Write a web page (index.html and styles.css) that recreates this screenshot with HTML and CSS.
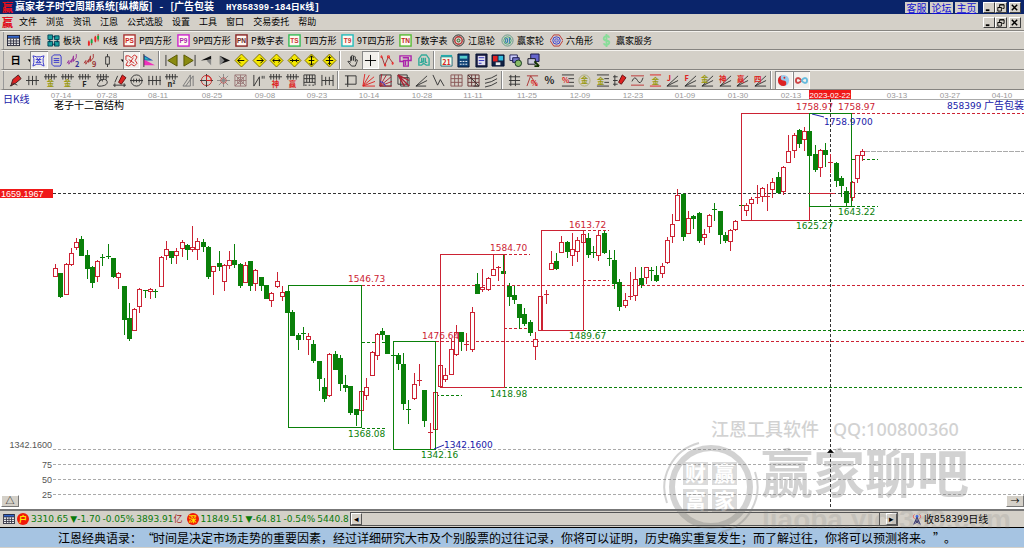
FILE: index.html
```html
<!DOCTYPE html>
<html lang="zh-CN">
<head>
<meta charset="utf-8">
<title>赢家老子时空周期系统</title>
<link rel="stylesheet" href="styles.css">
</head>
<body>
<header class="title-bar">
  <span class="brand">赢</span>
  <h1 class="title"><span>赢家老子时空周期系统[纵横版]</span><span>-</span><span>[广告包装</span><span class="title-code">HY858399-184日K线]</span></h1>
  <nav class="title-links"><a href="#service">客服</a><a href="#forum">论坛</a><a href="#home">主页</a></nav>
  <div class="window-buttons">
    <button class="win" aria-label="最小化"><svg viewBox="0 0 10 10"><path d="M2 8h4" stroke="#000" stroke-width="2"/></svg></button>
    <button class="win" aria-label="还原"><svg viewBox="0 0 10 10"><path d="M4 5V2h5v4H7M2 5h4v4H2zM4 2h5M2 5h4" fill="none" stroke="#000"/></svg></button>
    <button class="win win-close" aria-label="关闭"><svg viewBox="0 0 10 10"><path d="M2 2l6 6M8 2L2 8" stroke="#000" stroke-width="1.6"/></svg></button>
  </div>
</header>
<div class="menu-bar">
  <span class="brand">赢</span>
  <nav class="menus">
    <button>文件</button><button>浏览</button><button>资讯</button><button>江恩</button><button>公式选股</button><button>设置</button><button>工具</button><button>窗口</button><button>交易委托</button><button>帮助</button>
  </nav>
  <div class="window-buttons">
    <button class="win" aria-label="最小化子窗口"><svg viewBox="0 0 10 10"><path d="M2 8h4" stroke="#000" stroke-width="2"/></svg></button>
    <button class="win" aria-label="还原子窗口"><svg viewBox="0 0 10 10"><path d="M4 5V2h5v4H7M2 5h4v4H2zM4 2h5M2 5h4" fill="none" stroke="#000"/></svg></button>
    <button class="win win-close" aria-label="关闭子窗口"><svg viewBox="0 0 10 10"><path d="M2 2l6 6M8 2L2 8" stroke="#000" stroke-width="1.6"/></svg></button>
  </div>
</div>
<div class="toolbar features" id="features"></div>
<div class="toolbar" id="view-tools"></div>
<div class="toolbar" id="draw-tools"></div>
<main class="workspace">
  <svg class="chart" id="chart" viewBox="0 90 1024 419" role="img" aria-label="广告包装日K线"></svg>
  <button class="corner corner-left" aria-label="展开">△</button>
  <button class="corner corner-right" aria-label="向右">→</button>
  <svg class="watermark" viewBox="660 410 364 124" aria-hidden="true">
    <g fill="none" stroke="#777">
      <circle cx="711" cy="487" r="39" stroke-width="6"/>
      <path d="M667 503a46 46 0 0 1 32-60M755 472a46 46 0 0 1-34 60" stroke-width="2"/>
    </g>
    <g fill="#777">
      <path d="M683 462h25v23h-25zM712 462h25v23h-25zM683 489h25v23h-25zM712 489h25v23h-25z" opacity=".8"/>
      <text class="wm-name" x="761" y="493">赢家聊吧</text>
      <text class="wm-contact" x="711" y="436">江恩工具软件</text>
      <text class="wm-contact wm-latin" x="833" y="436">QQ:100800360</text>
      <text class="wm-site" x="762" y="529">liaoba.yicf369.com</text>
    </g>
    <g class="wm-seal" fill="#fff"><text x="685" y="481">财</text><text x="714" y="481">赢</text><text x="685" y="508">富</text><text x="714" y="508">家</text></g>
  </svg>
</main>
<footer class="status">
  <div class="indices">
    <svg class="cal" viewBox="0 0 14 12"><path d="M0 0h14v12H0z" fill="#223"/><path d="M1 1h12v2H1z" fill="#36c"/><path d="M1 4h12v7H1z" fill="#eee"/><path d="M1 6.5h12M1 9h12M4 4v7M7 4v7M10 4v7" stroke="#334"/></svg>
    <span class="badge">户</span>
    <span class="quote"><span>3310.65</span><span><i>▼</i>-1.70</span><span>-0.05%</span><span>3893.91<b>亿</b></span></span>
    <span class="badge">深</span>
    <span class="quote"><span>11849.51</span><span><i>▼</i>-64.81</span><span>-0.54%</span><span>5440.8</span></span>
  </div>
  <div class="scroller"><button aria-label="向左滚动">◂</button><div class="track"></div><button aria-label="向右滚动">▸</button></div>
  <div class="feed"><svg viewBox="0 0 12 14"><path d="M6 4L2 13M6 4l4 9M4 9h4M3 12l5-3M9 12L4 9M6 3v6" stroke="#226" fill="none"/><path d="M3 1a3 3 0 0 0 0 5M9 1a3 3 0 0 1 0 5" stroke="#e44" fill="none"/><circle cx="6" cy="3" r="1.5" fill="#36f"/></svg>收<span>858399</span>日线</div>
</footer>
<p class="motto">江恩经典语录：<span>“</span>时间是决定市场走势的重要因素，经过详细研究大市及个别股票的过往记录，你将可以证明，历史确实重复发生；而了解过往，你将可以预测将来。<span>”</span>。</p>
<script src="app.js"></script>
</body>
</html>
```
FILE: styles.css
```css
* { box-sizing: border-box; }
body {
  margin: 0;
  background: #a6c4e2;
  color: #000;
  font: 9px/12px "Noto Sans CJK SC", sans-serif;
  overflow-x: hidden;
}
button { font: inherit; color: inherit; border: 0; padding: 0; margin: 0; background: none; }
svg { display: block; }

.title-bar, .menu-bar { display: flex; align-items: center; padding: 0 3px 0 2px; }
.title-bar { height: 14px; background: #0a246a; color: #fff; }
.menu-bar { height: 17px; background: #d4d0c8; border-bottom: 1px solid #868480; }
.brand { width: 13px; color: #e01020; font-size: 11px; font-weight: 900; }
.title { display: flex; align-items: baseline; flex: 1; gap: 7px; margin: 0; font-size: 10px; font-weight: 700; white-space: nowrap; }
.title-code { margin-left: 5px; font-family: "Liberation Mono", "Noto Sans CJK SC", monospace; font-size: 9px; }
.title-links { display: flex; gap: 2px; margin-right: 5px; }
.title-links a { width: 23px; height: 11px; line-height: 11px; font-size: 10px; text-align: center; color: #1010d0; background: #d4d0c8; text-decoration: underline; }
.window-buttons { display: flex; }
.win { width: 12px; height: 11px; background: #d4d0c8; border: 1px solid; border-color: #fff #404040 #404040 #fff; }
.win svg { width: 9px; height: 9px; }
.win-close { margin-left: 2px; }
.menus { display: flex; flex: 1; gap: 9px; margin-left: 4px; }

.toolbar { display: flex; align-items: center; height: 20px; padding-left: 4px; background: #d4d0c8; border-top: 1px solid #f4f2ee; border-bottom: 1px solid #868480; border-left: 3px solid #d4d0c8; box-shadow: inset 1px 0 #999; }
.features { display: grid; grid-template-columns: 40px 40px 36px 54px 58px 53px 53px 58px 53px 49px 49px 50px 60px; height: 19px; }
.feature { display: flex; align-items: center; gap: 3px; white-space: nowrap; }
.feature svg { width: 13px; height: 13px; flex: none; }
.feature text { font: 700 7px "Liberation Sans", sans-serif; text-anchor: middle; }
.group { display: flex; justify-content: space-between; }
.group + .group { margin-left: 3px; padding-left: 3px; box-shadow: -1px 0 #fff, -2px 0 #888; }
.tool { display: grid; place-items: center; flex: 1; height: 18px; }
.tool svg { width: 13px; height: 13px; fill: none; stroke: #333; overflow: visible; }
.tool text { font: 700 8px "Noto Sans CJK SC", sans-serif; stroke: none; text-anchor: middle; }
.tool text.big { font-size: 11px; }
.tool.narrow { flex: none; width: 6px; }
.tool.pressed { background: #f2f0ec; box-shadow: inset 1px 1px #888, inset -1px -1px #fff; }

.workspace { position: relative; background: #fff; }
.chart { width: 100%; height: auto; }
.chart text { font: 9px "DejaVu Sans", "Noto Sans CJK SC", sans-serif; }
.chart .date { font: 8px "Liberation Sans", sans-serif; fill: #999; text-anchor: middle; }
.chart .date-current { fill: #fff; }
.chart .axis { font: 9px "Liberation Sans", sans-serif; fill: #555; text-anchor: end; }
.chart .price { font: 9px "Liberation Sans", sans-serif; }
.chart .name { font: 10px "Noto Sans CJK SC", sans-serif; }
.corner { position: absolute; bottom: 2px; width: 18px; height: 12px; line-height: 10px; background: #d4d0c8; border: 1px solid; border-color: #fff #777 #777 #fff; }
.corner-left { left: 1px; }
.corner-right { right: 0; }
.watermark { position: absolute; z-index: 1; right: 0; bottom: -25px; width: 364px; opacity: .32; pointer-events: none; }
.wm-name { font: 700 52px "Noto Sans CJK SC", sans-serif; }
.wm-contact { font: 500 18px "Noto Sans CJK SC", sans-serif; }
.wm-latin { font-family: "Noto Sans", sans-serif; }
.wm-site { font: 700 28px "Liberation Sans", sans-serif; opacity: .5; }
.wm-seal { font: 700 21px "Noto Sans CJK SC", sans-serif; }

.status { display: flex; align-items: center; height: 19px; background: #d4d0c8; border-top: 2px solid #777; border-bottom: 1px solid #000; }
.indices { display: flex; align-items: center; flex: none; padding-left: 3px; white-space: nowrap; }
.cal { flex: none; width: 12px; height: 10px; margin-right: 2px; }
.badge { flex: none; width: 12px; height: 12px; border-radius: 6px; background: #f01808; color: #ffe800; font-size: 8px; line-height: 12px; text-align: center; font-weight: 700; }
.quote { display: flex; flex: none; gap: 2px; margin: 0 4px 0 2px; color: #0a7a0a; font-family: "DejaVu Sans", "Noto Sans CJK SC", sans-serif; }
.quote:last-child { margin-right: 1px; }
.quote i { font-style: normal; }
.quote b { font-weight: 400; color: #a02020; }
.scroller { display: flex; flex: 1; height: 14px; border: 1px solid #555; }
.scroller button { width: 11px; border: 1px solid; border-color: #fff #555 #555 #fff; line-height: 10px; }
.track { flex: 1; border-right: 1px solid #555; margin-right: 6px; }
.feed { display: flex; align-items: center; width: 126px; padding-left: 14px; font-size: 10px; }
.feed span { font: 9px "DejaVu Sans", sans-serif; }
.feed svg { width: 10px; height: 13px; margin-right: 2px; }
.motto { margin: 0; padding: 0 0 0 58px; height: 20px; font-size: 12px; line-height: 20px; white-space: nowrap; overflow: hidden; border-bottom: 1px solid #d4d0c8; }
.motto span { display: inline-block; width: 11px; text-align: center; }
```
FILE: app.js
```js
const byId = (id) => document.getElementById(id);

/* ---- feature toolbar ---- */
const boxed = (t, c, tc) => `<rect x="1" y="1" width="12" height="12" fill="#fff8f0" stroke="${c}" stroke-width="1.5"/><text x="7" y="10" fill="${tc}">${t}</text>`;
const features = [
  ['行情', '<path d="M0 1h14v12H0z" fill="#223"/><path d="M1 2h12v2H1z" fill="#36c"/><path d="M1 5h12v7H1z" fill="#eee"/><path d="M1 7.500h12M1 10h12M4 5v7M7 5v7M10 5v7" stroke="#334"/>'],
  ['板块', '<path d="M1 1h5v5H1zM8 2h5v4H8zM1 8h5v5H1zM8 8h5v5H8z" fill="#18a0a0" stroke="#045" /><path d="M6 3h3M6 11h3M3 6v3M11 6v3" stroke="#024"/>'],
  ['K线', '<path d="M2 7v6M5 5v7M9 2v7M12 0v8" stroke="#c22"/><path d="M1 8h2v4H1zM8 3h2v5H8z" fill="#e22"/><path d="M4 6h2v4H4zM11 2h2v4h-2z" fill="#1a4"/>'],
  ['P四方形', boxed('PS', '#a33', '#c22')],
  ['9P四方形', boxed('P9', '#c2c', '#a2a')],
  ['P数字表', boxed('PN', '#822', '#622')],
  ['T四方形', boxed('TS', '#3b5', '#c33')],
  ['9T四方形', boxed('T9', '#2bb', '#c33')],
  ['T数字表', boxed('TN', '#5b3', '#b22')],
  ['江恩轮', '<g fill="none"><circle cx="7" cy="7" r="6" stroke="#222"/><circle cx="7" cy="7" r="4" stroke="#b33" stroke-width="1.500"/><circle cx="7" cy="7" r="1.500" stroke="#262"/></g>'],
  ['赢家轮', '<g fill="none"><circle cx="7" cy="7" r="6" stroke="#698"/><circle cx="7" cy="7" r="4" stroke="#4a7"/><path d="M5 5v4h2V5H5M9 4v6M10 5l-1 2" stroke="#27a"/></g>'],
  ['六角形', '<g fill="none"><path d="M4 1h6l4 6-4 6H4L0 7z" stroke="#b33"/><circle cx="7" cy="7" r="4" stroke="#33c"/><circle cx="7" cy="7" r="2" fill="#aac" stroke="#55d"/></g>'],
  ['赢家服务', '<path d="M10 4C9 1 4 2 4 5s6 1 6 4-5 4-6 1M7 0v14" fill="none" stroke="#8d9" stroke-width="2"/>'],
];
byId('features').innerHTML = features.map(([label, art]) => `<button class="feature"><svg viewBox="0 0 14 14">${art}</svg>${label}</button>`).join('');

/* ---- icon toolbars ---- */
const P = (d, extra = '') => `<path d="${d}" ${extra}/>`;
const red = 'stroke="#d22"';
const T = (t, x, y, c, big) => `<text x="${x}" y="${y}" fill="${c}"${big ? ' class="big"' : ''}>${t}</text>`;
const diamond = (d) => P('M7 0l7 7-7 7-7-7z', 'fill="#f5e800" stroke="#776a00"') + P(d, 'stroke="#000"');
const fan = P('M1 13L13 2M1 13L13 7M1 13h12');
const comb = P('M0 3h14M2 0v6M5 0v6M8 0v6M11 0v6');
const grid = 'M1 1h12v12H1zM1 5h12M1 9h12M5 1v12M9 1v12';
const rays = 'M1 13L3 0M1 13L8 1M1 13L13 3M1 13L14 8M1 13h13';
const pencil = P('M6 9l4-8 4 3-5 7z', 'fill="#d22" stroke="#611"');

const viewTools = [
  [150, [
    ['周期', T('日', 7, 11, '#000', 1)], ['周期列表', P('M1 6h5L3.500 9z', 'fill="#000" stroke="none"'), 'narrow'],
    ['区间', P('M1 2l4 1h4l4-1-1 3v4l1 4-4-2H5l-4 2 1-4V5zM4 6h6M4 9h6M5 4l4 5M9 4L5 9', 'stroke="#33c"'), 'pressed'],
    ['资料', P('M4 1h7l1 2v8l-1 2H4l-2-2V3zM4 5h6M4 7h6M4 9h6', 'stroke="#33c"')],
    ['均线二', P('M0 10l2-3v4l3-5v3l2-7v6l3-4V0', 'stroke="#939"') + T('2', 11, 14, '#339')],
    ['均线九', P('M0 10l2-3v4l3-5v3l2-7v6l3-4V0', 'stroke="#a33"') + T('9', 11, 14, '#933')],
    ['K线样式', P('M7 0v3M7 11v3M5 3h4v8H5z')], ['样式列表', P('M1 6h5L3.500 9z', 'fill="#000" stroke="none"'), 'narrow'],
    ['宫位', P('M1 2h3l3 2 3-3 3 2-2 4 2 3-3 3-3-2-3 2-3-1 2-4-2-2zM4 6l6 4M9 4l-4 6', 'stroke="#c22"'), 'pressed'],
    ['旗帜', P('M2 1l10 6H2z', 'fill="#25a" stroke="none"') + P('M2 6l12 6H2z', 'fill="#e3b" stroke="none"') + P('M2 0v14') + P('M3 3l5 3H3z', 'fill="#2bb" stroke="none"')],
  ]],
  [178, [
    ['最前', P('M1 1v12') + P('M13 1v12L3 7z', 'fill="#8a8a10" stroke="#550"')],
    ['最后', P('M13 1v12') + P('M1 1v12l10-6z', 'fill="#8a8a10" stroke="#550"')],
    ['前移', P('M1 7l11-5v4z', 'fill="#111" stroke="none"') + P('M7 7l5-2v7z', 'fill="#888" stroke="none"')],
    ['后移', P('M2 2l11 5-11 4z', 'fill="#111" stroke="none"') + P('M2 2l5 5-5 5z', 'fill="#888" stroke="none"')],
    ['左移', diamond('M3 7h7M6 4L3 7l3 3')], ['右移', diamond('M4 7h7M8 4l3 3-3 3')],
    ['横向展开', diamond('M3 7h8M5 5L3 7l2 2M9 5l2 2-2 2')], ['横向收缩', diamond('M2 7h10M4 5l2 2-2 2M10 5L8 7l2 2')],
    ['纵向展开', diamond('M7 2v10M5 4l2-2 2 2M5 10l2 2 2-2M4 7h6')], ['纵向收缩', diamond('M7 2v10M5 3l2 2 2-2M5 11l2-2 2 2M3 7h8')],
  ]],
  [91, [
    ['手形', P('M5 8V3q1-1 1 0v4-5q1-1 2 0v5-4q1-1 2 0v5l1-2q2 0 1 2l-2 5H6L2 8q1-1 3 1')],
    ['十字光标', P('M7 1v12M1 7h12', 'stroke="#000"'), 'pressed'],
    ['折线', P('M1 3l3 9 4-9 5 7', 'stroke="#933"') + P('M0 2h1v2H0zM4 11h1v2H4zM7 2h2v2H7zM12 9h1v2h-1z', 'stroke="#e22"')],
    ['宝塔', P('M1 2h12v5h-3v6H5V8H1zM4 4h6v3H4M7 7v5', 'stroke="#a2a" stroke-width="1.500"')],
    ['脑图', P('M2 12V5l3-4h5l3 4v7h-3l-3-2-2 2zM5 4v4h2V4M9 4v5h2M3 9h3', 'stroke="#3a9" stroke-width="1.500"')],
  ]],
  [107, [
    ['日历', P('M1 3h12v10H1z', 'fill="#efe" stroke="#267"') + P('M1 2h12', 'stroke="#2aa" stroke-width="2"') + T('21', 7, 12, '#d22')],
    ['计算器', P('M1 0h12v14H1z', 'fill="#147" stroke="#013"') + P('M3 2h8v3H3z', 'fill="#5cc" stroke="none"') + P('M3 8h8M3 11h8', 'stroke="#fff" stroke-dasharray="2 1"')],
    ['报表', P('M1 0h12v14H1z', 'fill="#224" stroke="#013"') + P('M3 2h8v10H3z', 'fill="#dde" stroke="none"') + P('M4 4h6M4 7h6M4 10h3', 'stroke="#33b"')],
    ['保存', P('M0 1h13v12H0z', 'fill="#124" stroke="#013"') + P('M1 2h5v6H1z', 'fill="#d22" stroke="none"') + P('M7 2h5v5H7z', 'fill="#3bd" stroke="none"') + P('M4 9h5v3H4z', 'fill="#eee" stroke="none"')],
    ['联网', P('M1 1h8v6H1z', 'fill="#ccf" stroke="#225"') + P('M4 4h7v5H4z', 'fill="#77c" stroke="#114"') + '<circle cx="10" cy="10" r="3.500" fill="#8b6" stroke="#132"/>'],
    ['打印', P('M4 0h9v8H4z', 'fill="#66c" stroke="#114"') + P('M1 5h8v6H1z', 'fill="#ccd" stroke="#112"') + P('M8 8l5 5M8 13h5', 'stroke="#130" stroke-width="2"')],
  ]],
];
const drawTools = [
  [329, [
    ['画笔', P('M2 13l2-7 6-5 3 4-6 5z', 'fill="#d22" stroke="#422"') + P('M1 13l4-3 4 2')],
    ['水平线', P('M0 7h14M3 2v10M7 2v10M11 2v10')],
    ['黄金一', comb + T('金', 7, 13, '#991')], ['黄金二', comb + T('金', 7, 13, '#991')],
    ['斐波', comb + T('F', 7, 14, '#222')], ['螺旋', comb + P('M3 7q8-3 9 1t-6 5-3-4 4-1')],
    ['标尺', pencil + P('M0 12h14M2 10v4M12 10v4M5 2L2 9')],
    ['圆周', '<circle cx="7" cy="7" r="6"/>' + P('M0 7h14M4 5v4M7 5v4M10 5v4')],
    ['等距线', P('M0 7h14M1 2v10M5 2v10M9 2v10M13 2v10')], ['平方', comb + T('n²', 7, 14, '#222')],
    ['角度', P('M1 13L9 1v12zM4 13L12 2v11', 'stroke="#777"')],
    ['轮盘', '<circle cx="7" cy="7" r="5.500" stroke="#b33"/>' + P('M7 0v14M0 7h14') + P('M7 2a5 5 0 0 1 5 5H7z', red)],
    ['星形', P('M7 0v14M0 7h14M2 2l10 10M12 2L2 12', 'stroke="#888"') + '<circle cx="7" cy="7" r="3" stroke="#b55"/>'],
    ['方阵', P('M1 1h12v12H1zM1 1l12 12M13 1L1 13M7 1v12M1 7h12M4 4h6v6H4z', 'stroke="#977"')],
    ['波段', P('M2 1v12L8 3v10M11 2v3M13 2v3')],
    ['神线', comb + T('神', 7, 14, '#d22')], ['赢线', comb + T('赢', 7, 14, '#d22')],
    ['帘线', P('M1 1h12v11M1 1v12M1 5h12M1 9h12M4 1v8M7 1v8M10 1v8M2 12h2M6 12h2M10 12h2')], ['缺口', P('M1 1v12M13 1v12M5 3v9M9 3v9M1 7h4M9 7h4M5 7h4')],
  ]],
  [161, [
    ['框选', P('M4 2h9v9H4zM1 2h3v9H1M4 11v3')], ['扇形', P(rays, red)],
    ['扇形框', P('M1 1h12v12H1z') + P(rays, 'stroke="#a23"') + P('M1 8a7 7 0 0 1 6 5', 'stroke="#33c"')],
    ['反扇形', P('M1 1h10v10H1zM4 4h9v9H4z') + P('M1 1l12 12M1 1l7 12M1 1l12 6', 'stroke="#a23" stroke-width="1.500"')],
    ['射线', P('M1 13L13 2M1 13L13 7M1 13h11')], ['谷线', P('M1 1l5 11 3-6 4 7')],
    ['网格', P(grid, 'stroke="#855"')], ['密网', P(grid, 'stroke="#633"') + P('M1 1l12 12M13 13h-6')],
    ['平行线', P('M0 6q7-1 13-5M0 10q7-1 13-5M0 14q7-1 13-5')],
  ]],
  [266, [
    ['刻度', P('M3 1v12M1 3h12M1 7h12M1 11h12M8 1v12')], ['百分方', P('M1 2h12M1 13L5 2l7 11', 'stroke="#a33"') + T('%', 9, 13, '#d22')],
    ['百分比', T('%', 7, 11, '#222', 1)], ['百分线', P('M1 1h13M8 5h6M8 9h6M1 13h13') + T('%', 5, 10, '#d22')],
    ['金环', '<circle cx="7" cy="7" r="6" stroke="#aa7"/>' + T('金', 7, 10, '#991')], ['金线', P('M1 1h13M9 5h5M9 9h5M1 13h13') + T('金', 5, 11, '#991')],
    ['笔标', P('M2 1v12M0 3h5M0 7h5M0 11h5') + pencil], ['波浪', P('M0 2h14M0 12h14', 'stroke="#b33"') + P('M1 8q3-7 6-1t6-3')],
    ['金框', P('M1 1h12M1 13h12', red) + T('金', 7, 11, '#991')], ['J线', fan + T('J', 3, 8, '#d22')],
    ['F线', fan + T('F', 3, 8, '#d22')], ['金扇', fan + T('金', 4, 9, '#991')], ['神扇', fan + T('神', 4, 9, '#d22')],
    ['赢扇', fan + T('赢', 5, 9, '#d22')], ['四扇', fan + T('四', 4, 9, '#d22')],
  ]],
  [38, [
    ['太极', '<circle cx="7" cy="7" r="6" fill="#9ce" stroke="none"/>' + P('M7 1a6 6 0 0 0 0 12 3 3 0 0 0 0-6 3 3 0 0 1 0-6z', 'fill="#d22" stroke="none"') + '<circle cx="8" cy="4" r="1" fill="#d22" stroke="none"/>', 'pressed'],
    ['无限', P('M7 7C4 3 1 4 1 7s3 4 6 0', 'stroke="#c44" stroke-width="2"') + P('M7 7c3-4 6-3 6 0s-3 4-6 0', 'stroke="#6bd" stroke-width="2"'), 'pressed'],
  ]],
];
const renderTools = (groups) => groups.map(([w, tools]) => `<div class="group" style="width:${w}px">` +
  tools.map(([label, art, cls = '']) => `<button class="tool ${cls}" aria-label="${label}"><svg viewBox="${cls === 'narrow' ? '-3 0 14 14' : '0 0 14 14'}">${art}</svg></button>`).join('') + '</div>').join('');
byId('view-tools').innerHTML = renderTools(viewTools);
byId('draw-tools').innerHTML = renderTools(drawTools);

/* ---- chart: each candle is colour, high, body top, body bottom, low ---- */
const candles = `R264 268 276 276,G273 273 296 297,R263 264 294 294,R248 253 264 265,R238 242 247 249,G236 239 255 255,G250 255 268 278,G266 267 282 287,R260 261 276 281,G254 257 258 265,G244 256 257 258,G258 258 276 277,R272 273 277 288,G286 286 319 334,G303 318 338 340,R308 309 330 330,R288 289 306 312,G290 290 291 297,R288 289 291 298,G289 291 292 297,R256 257 286 286,R241 249 255 259,G251 251 257 263,R248 251 255 263,R240 242 248 256,G244 245 249 259,R226 247 249 251,R238 241 249 259,G239 242 246 251,G246 247 276 278,R266 266 271 294,G251 263 266 270,R264 265 281 290,R251 260 265 268,G244 260 264 267,G263 264 285 287,R262 265 282 282,G261 261 285 290,R269 270 283 290,G277 277 285 290,G285 285 298 298,R292 293 300 306,R272 281 286 287,R286 292 296 300,G291 291 312 312,G310 312 335 335,G333 335 339 349,G327 333 334 339,R333 336 339 354,G340 344 360 362,G361 361 378 390,G378 387 398 401,R353 354 395 396,G351 354 369 369,G355 358 383 390,G375 385 387 391,G386 386 412 414,G409 409 414 425,R391 391 410 427,R378 387 395 399,R351 352 375 375,R333 334 355 359,G328 331 334 339,G335 335 353 353,G355 355 356 356,G353 355 363 369,G353 364 403 409,G400 409 410 423,R373 384 398 399,R364 380 381 385,G390 390 420 426,R423 432 433 449,R391 392 429 449,R365 365 386 387,R368 375 379 381,R339 349 374 374,R325 332 354 355,G332 332 341 350,R333 344 345 350,R307 312 349 351,G273 284 293 293,R269 287 289 291,R277 278 289 290,R254 269 275 275,R266 267 268 280,G254 271 273 273,G283 286 296 305,G286 295 299 303,G304 304 317 328,G308 314 323 325,G320 322 332 335,R332 339 346 359,R296 296 330 330,R290 294 295 303,R251 263 269 269,G253 261 268 269,R236 242 252 252,G241 242 251 257,R233 249 255 265,R237 240 251 261,R230 234 242 242,G233 238 254 257,G246 252 253 257,R230 235 255 260,G231 233 252 253,G250 258 259 265,G250 260 283 288,G279 282 306 310,R293 300 305 307,R272 296 297 299,R267 279 295 300,G267 278 284 287,R267 267 277 283,G267 270 271 280,G266 275 280 281,R263 266 273 277,R237 240 262 263,R214 224 236 242,R189 195 220 220,G193 194 236 240,R211 218 233 233,G215 216 218 228,G212 213 240 242,R229 234 237 244,R214 215 226 232,G203 209 210 220,G211 211 234 243,G232 235 240 242,R229 230 241 250,R220 221 229 230,G205 205 206 206,R203 205 210 215,R197 199 203 220,R185 197 198 203,R187 188 196 201,R184 196 197 210,R178 182 189 197,G172 177 192 193,R166 167 191 194,R135 151 162 162,R133 135 150 157,G129 130 143 147,R127 131 139 150,G131 131 155 155,G145 154 169 171,R149 150 167 176,G143 150 154 166,R154 162 163 172,G162 163 180 186,G176 178 185 196,G187 191 202 206,R181 182 197 200,R155 155 178 182,R149 151 155 160`;
const RED = '#cc2233', GREEN = '#0a800a';
const STEP = 5.275;
const line = (x1, y1, x2, y2, c, dash = '') => `<path d="M${x1} ${y1}L${x2} ${y2}" stroke="${c}" ${dash && `stroke-dasharray="${dash}"`}/>`;
const text = (s, x, y, c, cls = '') => `<text x="${x}" y="${y}" fill="${c}" class="${cls}">${s}</text>`;
const frame = (x, y, x2, y2, c) => `<rect x="${x}" y="${y}" width="${x2 - x}" height="${y2 - y}" fill="none" stroke="${c}"/>`;
const D = '3 2';
let out = line(53, 99.5, 1024, 99.5, '#aaa');
[449.5, 464.5, 479.5, 494.5].forEach((y) => { out += line(53, y, 1024, y, '#aaa', D); });
out += [[362, 285.5, 1024, RED], [436, 341.5, 1024, RED], [852, 113.5, 1024, RED], [504, 254.5, 530, RED], [504, 328.5, 527, RED],
  [583, 230.5, 609, RED], [583, 280.5, 609, RED], [583, 330.5, 1024, GREEN], [504, 387.5, 1024, GREEN], [809, 220.5, 1024, GREEN],
  [852, 159.5, 878, GREEN], [852, 206.5, 878, GREEN], [362, 342.5, 389, GREEN], [362, 428.5, 387, GREEN], [436, 395.5, 462, GREEN]]
  .map(([x, y, x2, c]) => line(x, y, x2, y, c, D)).join('');
out += line(865, 151.5, 1024, 151.5, '#aaa', '5 1') + line(53, 193.5, 1024, 193.5, '#333', D) + line(830.5, 99, 830.5, 508, '#333', D);
candles.split(',').forEach((row, i) => {
  const up = row[0] === 'R';
  const [hi, top, bottom, lo] = row.slice(1).split(' ').map(Number);
  const x = Math.round(55 + i * STEP) + 0.5;
  const c = up ? RED : GREEN;
  out += line(x, hi, x, top, c) + line(x, bottom, x, lo + 1, c);
  if (bottom - top < 2) out += line(x - 2.5, top + 0.5, x + 2.5, top + 0.5, c) + line(x, top, x, bottom, c);
  else out += `<rect x="${x - 2}" y="${top + 0.5}" width="4" height="${bottom - top}" fill="${up ? '#fff' : GREEN}" stroke="${c}"/>`;
});
out += frame(288.5, 285.5, 361.5, 427.5, GREEN) + frame(393.5, 341.5, 435.5, 449.5, GREEN) + frame(440.5, 254.5, 504.5, 387.5, RED)
  + frame(541.5, 230.5, 583.5, 330.5, RED) + frame(741.5, 113.5, 809.5, 220.5, RED) + frame(809.5, 113.5, 851.5, 206.5, GREEN)
  + line(809, 193.5, 835, 193.5, RED) + line(812, 114, 824, 117, '#22a') + line(434, 449, 444, 445, '#22a')
  + '<path d="M827 453h7l-3.500-4z"/>';
[['1546.73', 348, 282, RED], ['1476.64', 422, 339, RED], ['1584.70', 490, 251, RED], ['1613.72', 569, 228, RED], ['1758.97', 796, 110, RED], ['1758.97', 838, 110, RED],
  ['1368.08', 348, 437, GREEN], ['1342.16', 421, 458, GREEN], ['1418.98', 490, 397, GREEN], ['1489.67', 569, 339, GREEN], ['1625.27', 796, 229, GREEN], ['1643.22', 838, 215, GREEN],
  ['1342.1600', 444, 448, '#1818a8'], ['1758.9700', 824, 125, '#1818a8']].forEach((a) => { out += text(...a); });
[['07-14', 61], ['07-28', 107], ['08-11', 158], ['08-25', 212], ['09-08', 265], ['09-23', 317], ['10-14', 369], ['10-28', 422], ['11-11', 473], ['11-25', 527], ['12-09', 580], ['12-23', 633], ['01-09', 685], ['01-30', 738], ['02-13', 791], ['03-13', 897], ['03-27', 950], ['04-10', 1002]]
  .forEach(([s, x]) => { out += text(s, x, 98, '', 'date'); });
out += '<rect x="809" y="90" width="42" height="9" fill="#f01818"/>' + text('2023-02-22', 830, 98, '', 'date date-current')
  + '<rect x="0" y="189" width="53" height="9" fill="#f01818"/>' + text('1659.1967', 1, 197, '#fff', 'price')
  + text('日K线', 3, 103, '#1818a8', 'name') + text('老子十二宫结构', 54, 109, '#000', 'name')
  + text('858399', 947, 109, '#1818a8') + text('广告包装', 984, 109, '#1818a8', 'name')
  + text('1342.1600', 52, 448, '', 'axis') + text('75', 52, 468, '', 'axis') + text('50', 52, 483, '', 'axis') + text('25', 52, 498, '', 'axis');
byId('chart').innerHTML = out;
```
